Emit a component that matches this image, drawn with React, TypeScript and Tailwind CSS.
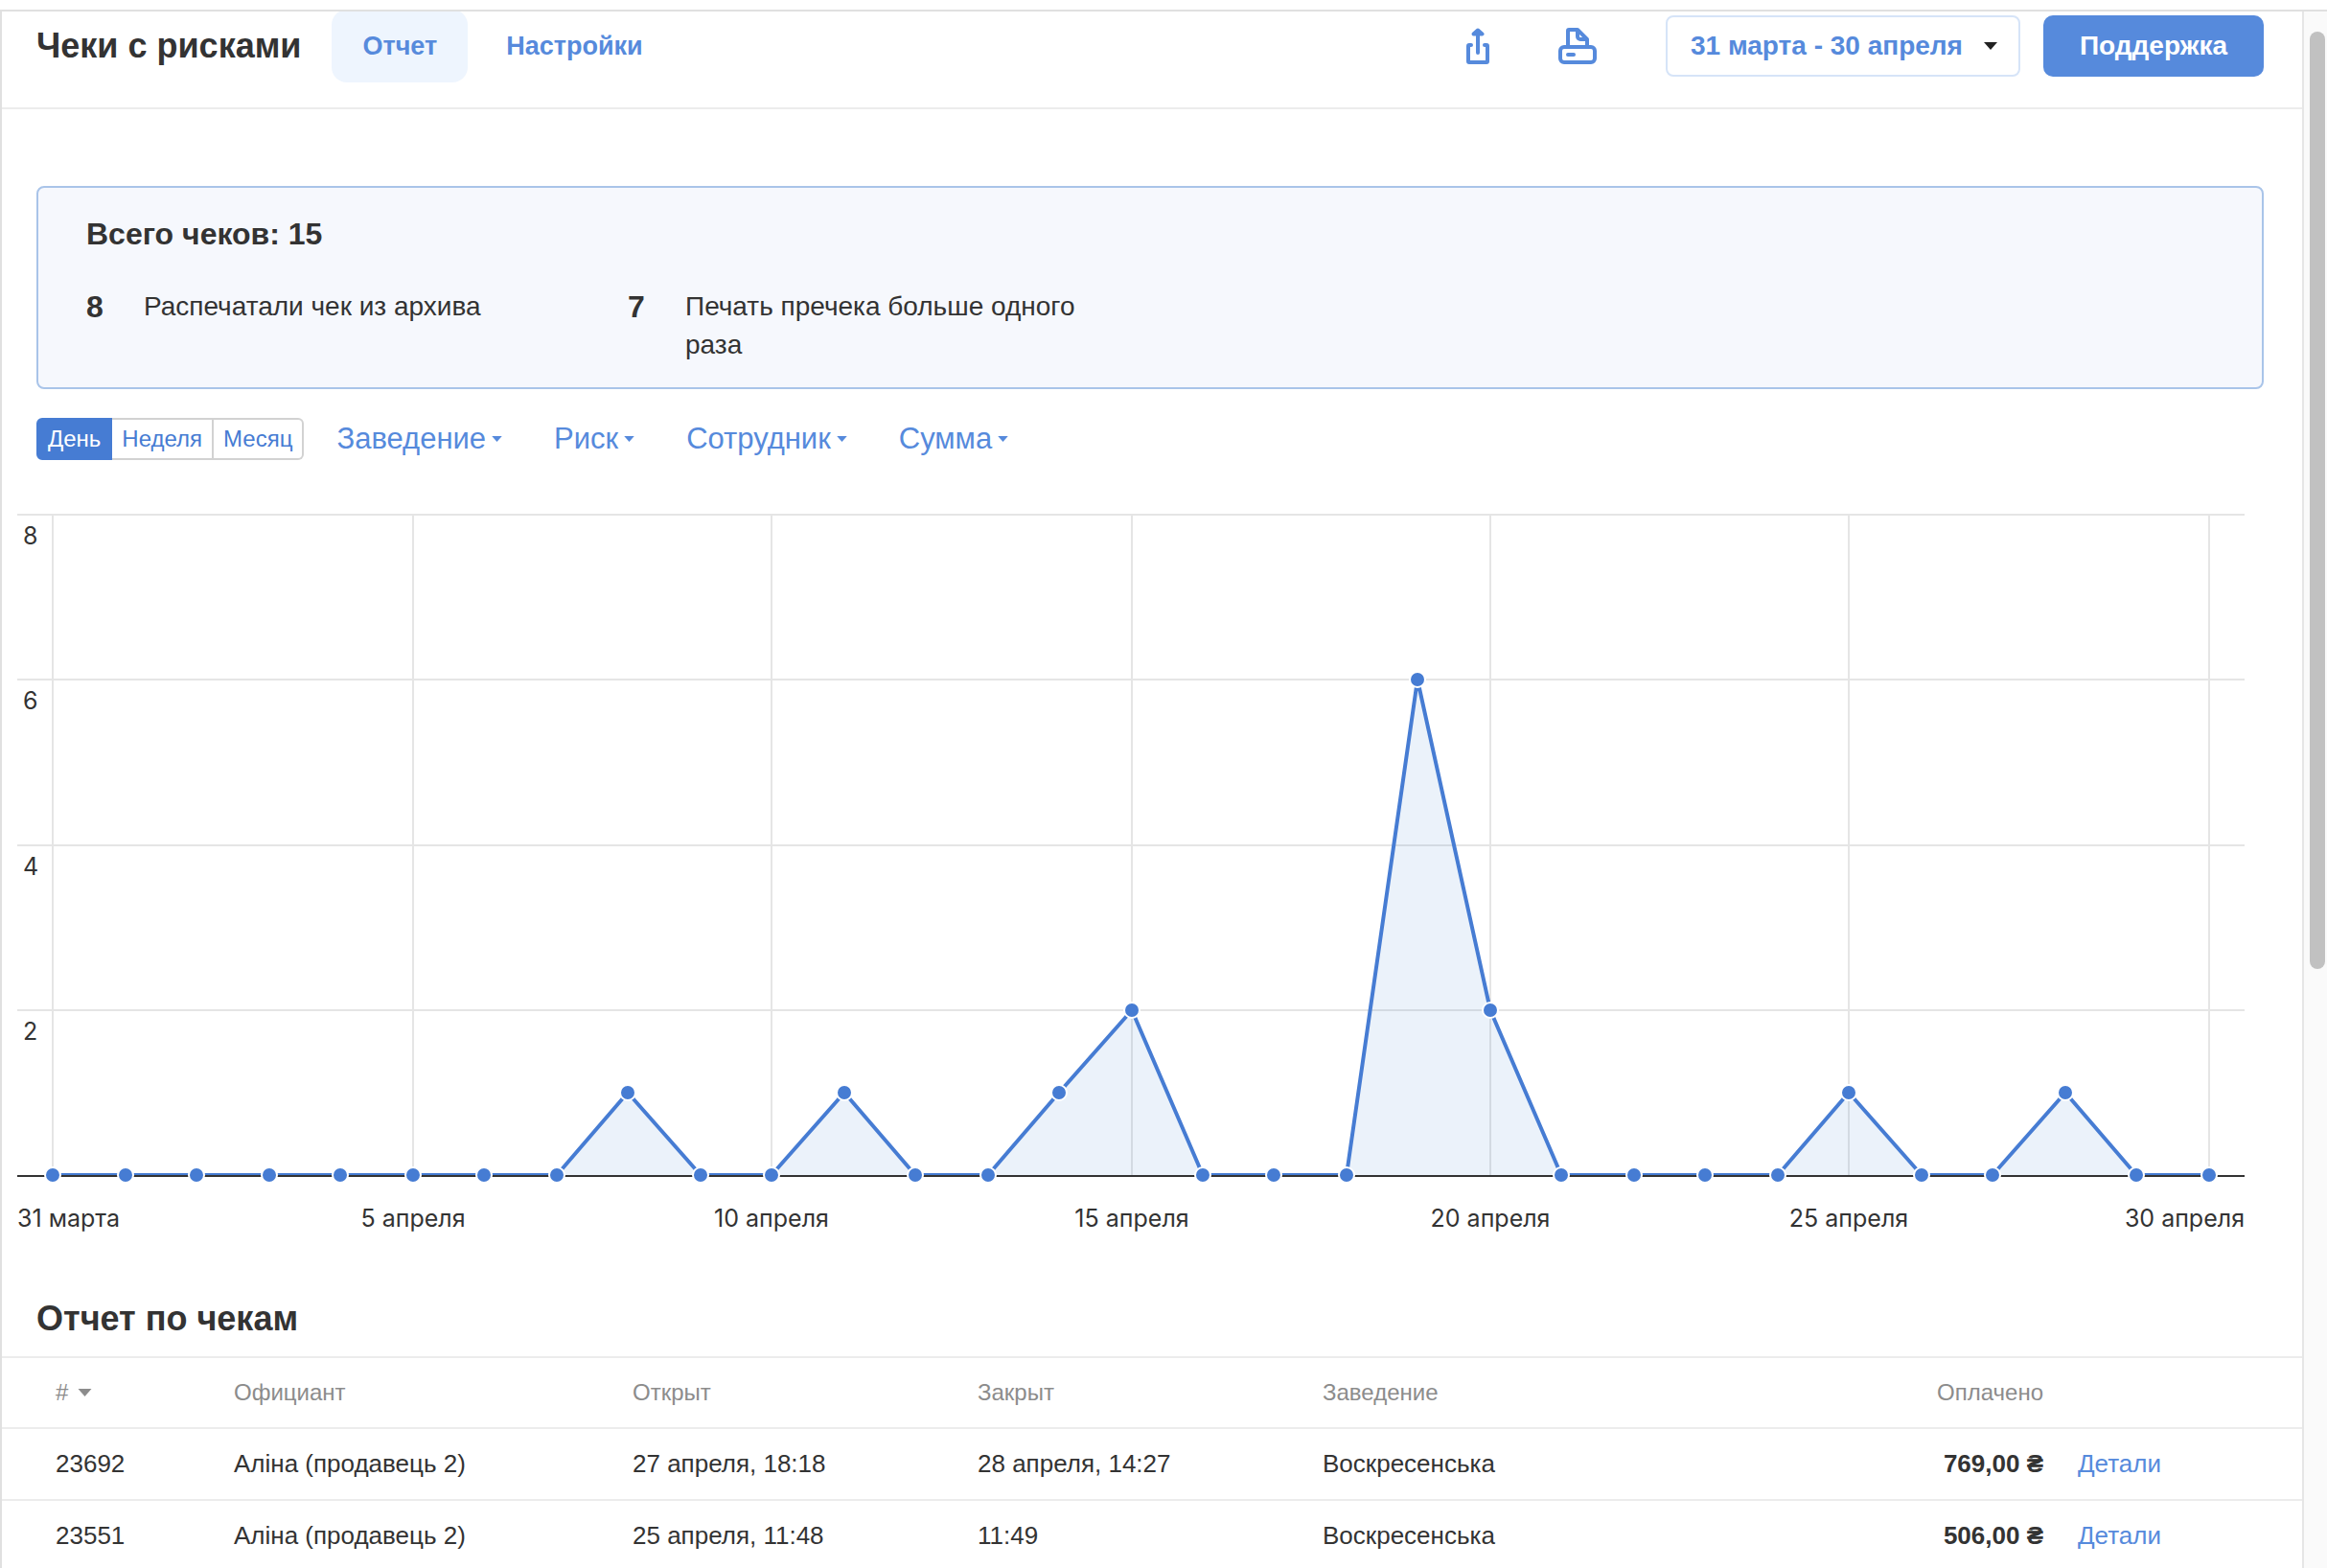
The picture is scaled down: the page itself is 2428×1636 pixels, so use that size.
import { useState } from "react";

const DAYS = [
  0, 0, 0, 0, 0, 0, 0, 0, 1, 0, 0, 1, 0, 0, 1, 2, 0, 0, 0, 6, 2, 0, 0, 0, 0, 1, 0, 0, 1, 0, 0,
];

const PERIODS = ["День", "Неделя", "Месяц"];
const FILTERS = ["Заведение", "Риск", "Сотрудник", "Сумма"];

const RISKS = [
  { count: 8, label: "Распечатали чек из архива" },
  { count: 7, label: "Печать пречека больше одного раза" },
];

const RECEIPTS = [
  { id: "23692", waiter: "Аліна (продавець 2)", opened: "27 апреля, 18:18", closed: "28 апреля, 14:27", place: "Воскресенська", paid: "769,00 ₴" },
  { id: "23551", waiter: "Аліна (продавець 2)", opened: "25 апреля, 11:48", closed: "11:49", place: "Воскресенська", paid: "506,00 ₴" },
];

// chart geometry, in viewBox units; days snap to a 2-unit grid
const W = 2324;
const BASE = 706;
const px = (i: number) => 37 + Math.round(i * 37.49 + 0.16) * 2;
const py = (v: number) => Math.round(BASE - v * 86.1);

function Caret({ className }: { className?: string }) {
  return (
    <svg viewBox="0 0 14 8" className={className} fill="currentColor" aria-hidden="true">
      <path d="M0 0h14L7 8z" />
    </svg>
  );
}

function ShareIcon() {
  return (
    <svg width="24" height="38" viewBox="0 0 24 38" fill="none" stroke="currentColor" strokeWidth="4" strokeLinecap="round" strokeLinejoin="round">
      <path d="M5 18H3a1 1 0 0 0-1 1v16a1 1 0 0 0 1 1h18a1 1 0 0 0 1-1V19a1 1 0 0 0-1-1h-2" />
      <path d="M12 4v22" />
      <path d="M7.500 6.500 12 2.500l4.500 4z" fill="currentColor" />
    </svg>
  );
}

function PrinterIcon() {
  return (
    <svg width="40" height="38" viewBox="0 0 40 38" fill="none" stroke="currentColor" strokeWidth="4" strokeLinecap="round" strokeLinejoin="round">
      <rect x="2" y="20" width="36" height="16" rx="4" />
      <path d="M10 20V3a1 1 0 0 1 1-1h9l10 10v8" />
      <path d="M20 3v6a3 3 0 0 0 3 3h6" />
      <path d="M10 28h6" />
    </svg>
  );
}

function ChecksChart() {
  const line = DAYS.map((v, i) => `${px(i)},${py(v)}`).join(" ");
  return (
    <svg viewBox={`0 0 ${W} 780`} className="block w-full h-auto font-['Inter',sans-serif] text-[25px]" role="img" aria-label="Чеки по дням">
      {[8, 6, 4, 2].map((v) => (
        <g key={v}>
          <line x1="0" x2={W} y1={py(v)} y2={py(v)} stroke="#e5e5e5" strokeWidth="2" />
          <text x="6" y={py(v) + 31} fill="#333">{v}</text>
        </g>
      ))}
      {[0, 5, 10, 15, 20, 25, 30].map((i) => (
        <line key={i} x1={px(i)} x2={px(i)} y1={py(8)} y2={BASE} stroke="#e5e5e5" strokeWidth="2" />
      ))}
      <polygon points={`${px(0)},${BASE} ${line} ${px(30)},${BASE}`} fill="#3f83d2" fillOpacity="0.1" />
      <polyline points={line} fill="none" stroke="#467cd3" strokeWidth="4" strokeLinejoin="round" />
      <line x1="0" x2={W} y1={BASE + 1} y2={BASE + 1} stroke="#333" strokeWidth="2" />
      {DAYS.map((v, i) => (
        <circle key={i} cx={px(i)} cy={py(v)} r="8" fill="#467cd3" stroke="#fff" strokeWidth="2" />
      ))}
      <text x="0" y="760" fill="#333">31 марта</text>
      {[5, 10, 15, 20, 25].map((d) => (
        <text key={d} x={px(d)} y="760" textAnchor="middle" fill="#333">{`${d} апреля`}</text>
      ))}
      <text x={W} y="760" textAnchor="end" fill="#333">30 апреля</text>
    </svg>
  );
}

export default function App() {
  const [period, setPeriod] = useState("День");

  return (
    <div className="flex h-screen flex-col overflow-hidden bg-white pt-[10px] font-['Liberation_Sans',Arial,sans-serif] text-[26px] text-[#333]">
      <div className="flex min-h-0 flex-1 border-t-2 border-l-2 border-[#e0e0e0]">
        <main className="min-w-0 flex-1 overflow-hidden">
          <header className="border-b-2 border-[#ececec] pr-10 pb-7 pl-9">
            <div className="flex h-[72px] items-center">
              <h1 className="text-[36px] font-bold">Чеки с рисками</h1>
              <nav className="ml-8 flex items-center text-[27px] font-bold text-[#568adc]">
                <a href="#report" className="flex h-[76px] items-center rounded-[16px] bg-[#eef5fe] px-8">Отчет</a>
                <a href="#settings" className="flex h-[76px] items-center px-10">Настройки</a>
              </nav>
              <div className="ml-auto flex items-center">
                <button type="button" aria-label="Экспорт" className="mr-[72px] text-[#568adc]">
                  <ShareIcon />
                </button>
                <button type="button" aria-label="Печать" className="mr-[72px] text-[#568adc]">
                  <PrinterIcon />
                </button>
                <div className="relative mr-6">
                  <select aria-label="Период" className="h-16 w-[370px] appearance-none rounded-lg border-2 border-[#d6e4f8] bg-white pl-6 text-[28px] font-bold text-[#568adc]">
                    <option>31 марта - 30 апреля</option>
                  </select>
                  <Caret className="pointer-events-none absolute top-7 right-6 h-2 w-[14px] text-[#222]" />
                </div>
                <button type="button" className="h-16 w-[230px] rounded-[10px] bg-[#568adc] text-[28px] font-bold text-white">
                  Поддержка
                </button>
              </div>
            </div>
          </header>

          <section className="mt-20 mr-10 ml-9 rounded-lg border-2 border-[#a9c4e9] bg-[#f6f8fd] pt-7 pr-12 pb-6 pl-[50px]">
            <h2 className="text-[32px] leading-10 font-bold">Всего чеков: 15</h2>
            <div className="mt-9 flex">
              {RISKS.map((r) => (
                <div key={r.label} className="flex w-[565px] items-start pr-12">
                  <span className="w-[60px] shrink-0 text-[32px] leading-10 font-bold">{r.count}</span>
                  <span className="text-[28px] leading-10">{r.label}</span>
                </div>
              ))}
            </div>
          </section>

          <div className="mt-[30px] ml-9 flex h-11 items-center">
            <div className="flex h-11 text-[24px]">
              {PERIODS.map((p) => (
                <button
                  key={p}
                  type="button"
                  onClick={() => setPeriod(p)}
                  className={
                    "border-y-2 border-r-2 px-[10px] last:rounded-r-md first:rounded-l-md first:border-l-2 " +
                    (p === period
                      ? "border-[#467cd3] bg-[#467cd3] text-white"
                      : "border-[#d2d2d2] bg-white text-[#467cd3]")
                  }
                >
                  {p}
                </button>
              ))}
            </div>
            <div className="ml-[34px] flex gap-[54px] text-[31px] text-[#568adc]">
              {FILTERS.map((f) => (
                <button key={f} type="button" aria-haspopup="listbox" className="flex items-center gap-[6px]">
                  {f}
                  <Caret className="h-[6px] w-[11px]" />
                </button>
              ))}
            </div>
          </div>

          <div className="mt-10 mr-[60px] ml-4">
            <ChecksChart />
          </div>

          <h2 className="mt-[52px] mb-[15px] ml-9 text-[36px] leading-[48px] font-bold">Отчет по чекам</h2>
          <table className="w-full table-fixed border-t-2 border-[#ececec] text-left">
            <thead>
              <tr className="h-[74px] border-b-2 border-[#ececec] text-[24px] text-[#8c8c8c]">
                <th className="w-[242px] pl-14 font-normal">
                  <button type="button" className="flex items-center gap-[10px]">
                    #
                    <Caret className="h-2 w-[15px]" />
                  </button>
                </th>
                <th className="w-[416px] font-normal">Официант</th>
                <th className="w-[360px] font-normal">Открыт</th>
                <th className="w-[360px] font-normal">Закрыт</th>
                <th className="font-normal">Заведение</th>
                <th className="w-[200px] text-right font-normal">Оплачено</th>
                <th className="w-[270px]" aria-label="Действия" />
              </tr>
            </thead>
            <tbody>
              {RECEIPTS.map((r) => (
                <tr key={r.id} className="h-[75px] border-b-2 border-[#ececec]">
                  <td className="pl-14">{r.id}</td>
                  <td>{r.waiter}</td>
                  <td>{r.opened}</td>
                  <td>{r.closed}</td>
                  <td>{r.place}</td>
                  <td className="text-right font-bold">{r.paid}</td>
                  <td className="pl-9">
                    <a href={`#${r.id}`} className="text-[#568adc]">Детали</a>
                  </td>
                </tr>
              ))}
            </tbody>
          </table>
        </main>

        <div className="w-[26px] shrink-0 border-l-2 border-[#e6e6e6] bg-[#fafafa] pt-[21px] pr-[2px] pl-[6px]">
          <div className="h-[61%] rounded-full bg-[#c1c1c1]" />
        </div>
      </div>
    </div>
  );
}
